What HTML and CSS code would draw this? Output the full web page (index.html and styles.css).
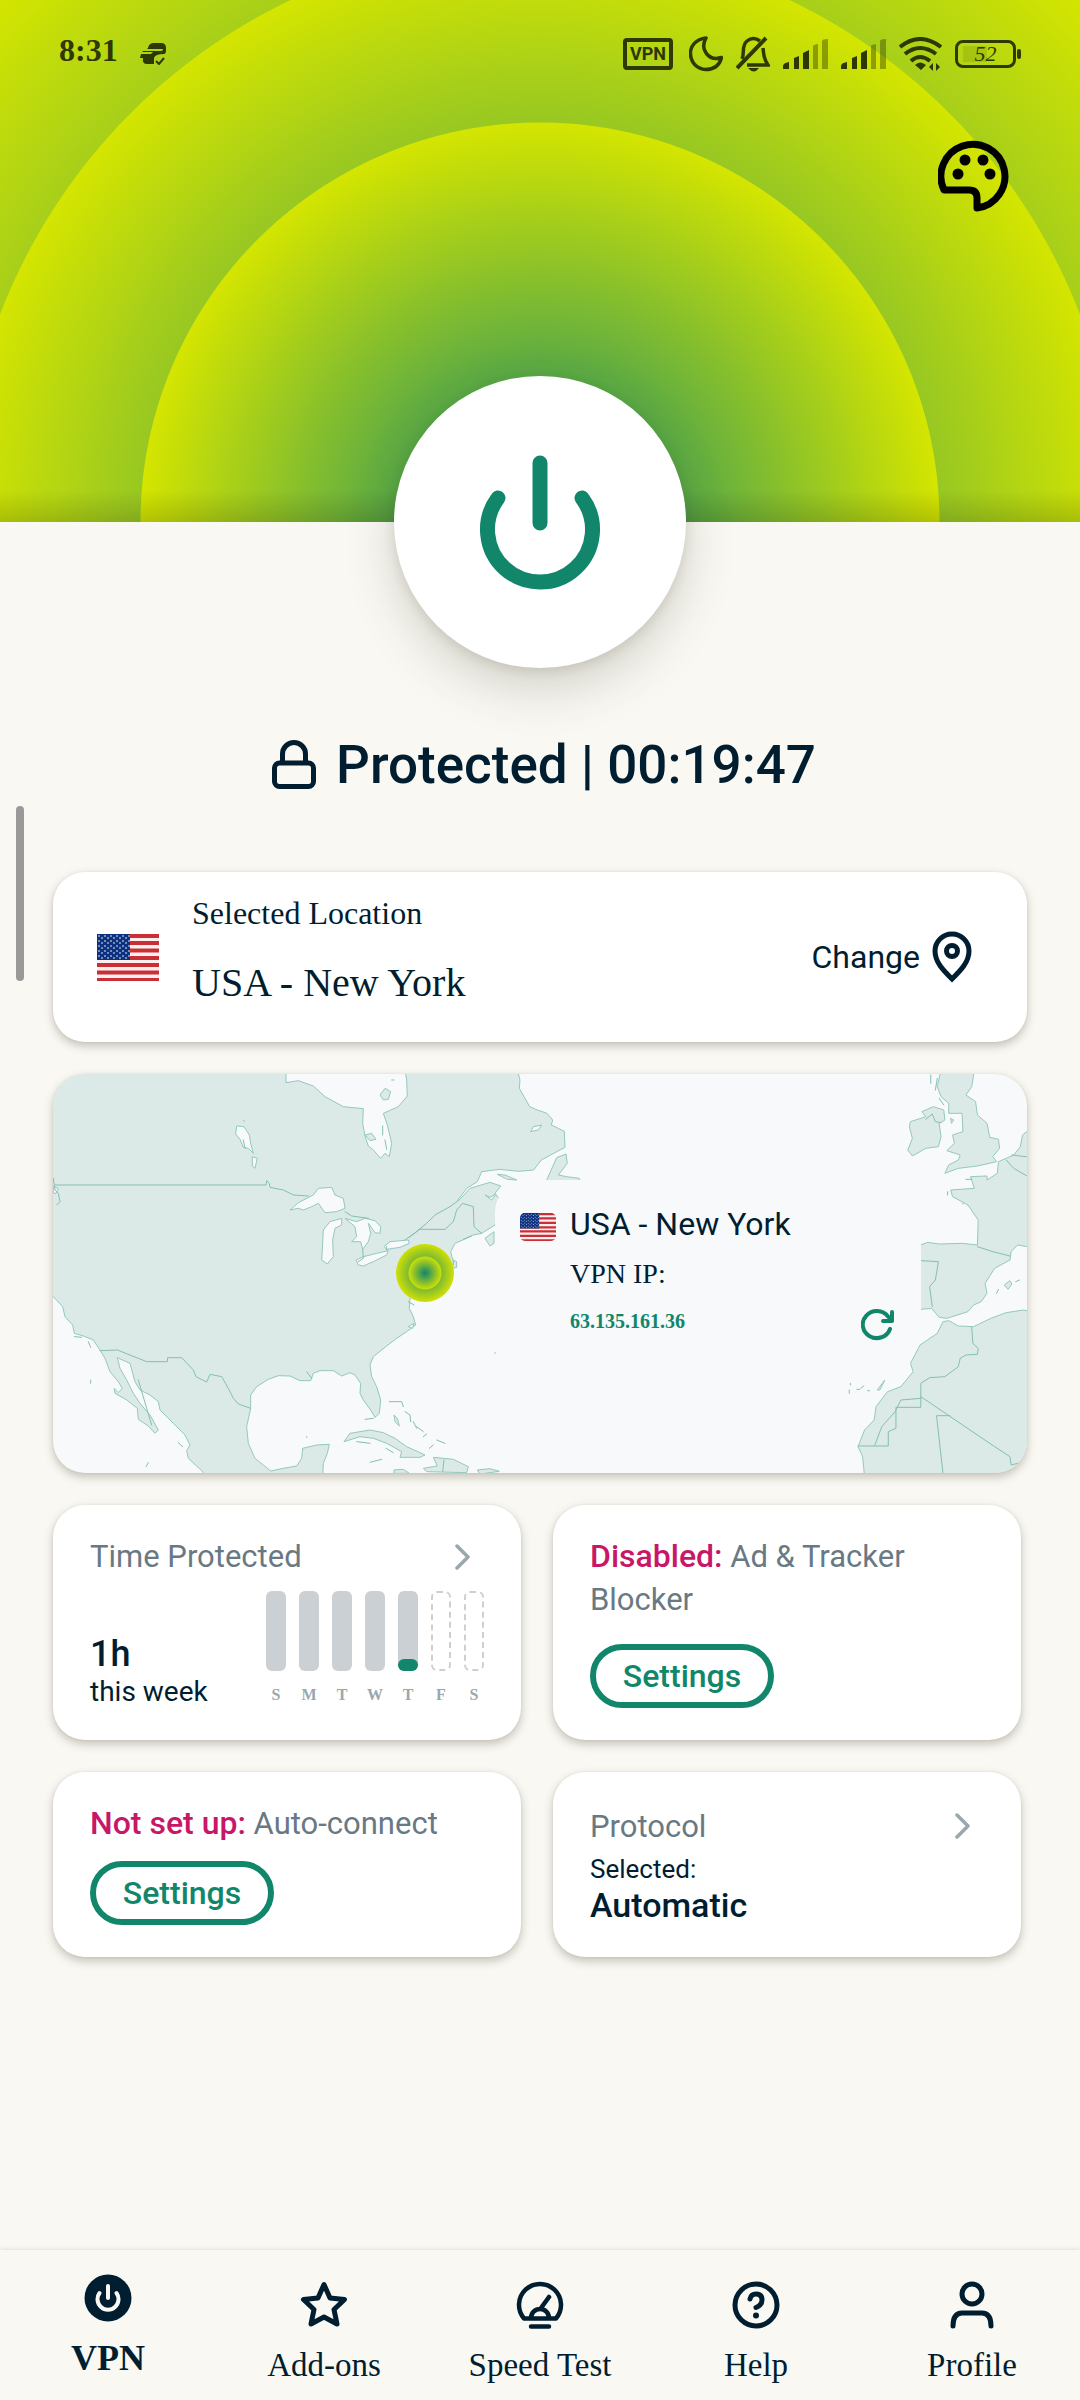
FILE: index.html
```html
<!DOCTYPE html>
<html lang="en">
<head>
<meta charset="utf-8">
<meta name="viewport" content="width=device-width, initial-scale=1">
<title>VPN</title>
<link rel="stylesheet" href="styles.css">
</head>
<body>
<svg class="defs" aria-hidden="true">
  <defs>
    <pattern id="stars" width="6" height="5" patternUnits="userSpaceOnUse">
      <circle cx="2" cy="2" r="0.8" fill="#fff"/><circle cx="5" cy="4" r="0.8" fill="#fff"/>
    </pattern>
    <symbol id="flag" viewBox="0 0 62 47" preserveAspectRatio="none">
      <rect width="62" height="47" fill="#fdeef0"/>
      <path d="M0 2h62M0 9h62M0 16.500h62M0 24h62M0 31h62M0 38.500h62M0 46h62" stroke="#c93035" stroke-width="3.800"/>
      <rect width="33" height="26" fill="#0b3180"/>
      <rect width="33" height="26" fill="url(#stars)"/>
    </symbol>
    <symbol id="chevron" viewBox="0 0 16 26">
      <path d="M2 2l11 11L2 24" fill="none" stroke="#9aa7ac" stroke-width="3.500" stroke-linecap="round" stroke-linejoin="round"/>
    </symbol>
    <symbol id="signal" viewBox="0 0 45 30">
      <path d="M0 30v-3q0-3 6-4v7zM11 30V19l5-2v13zM20 30V14l6-3v19z" fill="#2d3803"/>
      <path d="M30 30V7q0-1 5-2v25zM39 30V2q0-2 6-2v30z" fill="#2d3803" opacity=".4"/>
    </symbol>
  </defs>
</svg>

<header class="hero">
  <div class="status">
    <time class="clock">8:31</time>
    <svg class="app" width="26" height="22" viewBox="0 0 26 22"><path d="M8 5q1-5 6-5h7q5 0 5 5v2q0 4-2 4-9 0-10 4v6H7q-5 0-4-6H0l1-4h10l2-2H2l1-1h18q2 0 2-2H7z" fill="#2d3803"/><path d="M16 18l3 3 5-6" fill="none" stroke="#2d3803" stroke-width="2"/></svg>
    <div class="status-icons">
      <span class="vpn-badge">VPN</span>
      <svg width="34" height="36" viewBox="0 0 34 36"><path d="M17 2C7 3 1 10 1.500 18c.5 9 7 15 15 15.500 8 0 14-4 16-12-13 4-22-8-15.500-19.500z" fill="none" stroke="#2d3803" stroke-width="3.500" stroke-linejoin="round"/></svg>
      <svg width="34" height="36" viewBox="0 0 34 36"><path d="M6 23c3-6-1-13 5-18 5-4 9-3 13 0M27 12c1 7 0 10 5 17H11" fill="none" stroke="#2d3803" stroke-width="3.500"/><path d="M1 32L30 2" stroke="#2d3803" stroke-width="4"/><path d="M12 32h11q-5 7-11 0z" fill="#2d3803"/></svg>
      <svg width="45" height="30"><use href="#signal"/></svg>
      <svg width="45" height="30"><use href="#signal"/></svg>
      <svg width="43" height="34" viewBox="0 0 43 34"><g fill="none" stroke="#2d3803" stroke-width="4"><path d="M1 10q20-16 41 0M6 17q15-12 31 0M12 24q9-8 19 0"/></g><path d="M16 28q5-5 11 0l-5 5zM34 26v8l-4-4M37 34v-8l4 4" fill="#2d3803"/></svg>
      <span class="battery">52</span>
    </div>
  </div>
  <button class="palette" aria-label="Theme">
    <svg width="72" height="72" viewBox="0 0 72 72"><path d="M39 68A32 32 0 1 0 6 50h25q8 0 8 8z" fill="none" stroke="#000" stroke-width="7" stroke-linejoin="round"/><circle cx="20" cy="34" r="5.500"/><circle cx="27" cy="20" r="5.500"/><circle cx="45" cy="20" r="5.500"/><circle cx="52" cy="34" r="5.500"/></svg>
  </button>
</header>

<main>
  <button class="power" aria-label="Disconnect">
    <svg width="122" height="138" viewBox="0 0 122 138"><g fill="none" stroke="#11866b" stroke-width="15" stroke-linecap="round"><path d="M61 10v60M19 45a52.500 52.500 0 1 0 84 0"/></g></svg>
  </button>
  <h1 class="state">
    <svg width="48" height="52" viewBox="0 0 48 52"><g fill="none" stroke="#001e30" stroke-width="5"><rect x="4.500" y="24" width="39" height="23.500" rx="5"/><path d="M12.500 24v-9a11.500 11.500 0 0 1 23 0v9"/></g></svg>
    Protected | 00:19:47
  </h1>

  <section class="card location">
    <svg width="62" height="47"><use href="#flag"/></svg>
    <div class="place">
      <div class="place-label">Selected Location</div>
      <div class="place-name">USA - New York</div>
    </div>
    <button class="change">Change
      <svg width="48" height="52" viewBox="0 0 48 52"><path d="M24 48C15 39 7 31 7 20a17 17 0 0 1 34 0c0 11-8 19-17 28z" fill="none" stroke="#001e30" stroke-width="5"/><circle cx="24" cy="20" r="5.500" fill="none" stroke="#001e30" stroke-width="5"/></svg>
    </button>
  </section>

  <section class="card map">
    <svg class="world" viewBox="0 0 974 399" preserveAspectRatio="xMidYMid slice" aria-hidden="true">
      <g class="land" transform="translate(-13 -14) scale(.33333)">
        <path d="M30 30H738V68L775 62 820 78 855 110 910 140 970 146 968 190 975 228 985 258 1000 270 1022 295 1035 280 1048 290 1055 250 1042 195 1030 160 1075 140 1102 108 1100 60 1095 30H1432L1440 60 1438 85 1455 115 1469 140 1492 150 1521 160 1538 180 1534 195 1555 205 1573 214 1575 262 1532 285 1504 300 1481 330 1435 334 1380 328 1325 335 1312 365 1280 385 1250 425 1230 440 1260 418 1290 385 1350 367 1382 378 1365 400 1380 420 1365 495 1325 520 1300 525 1275 537 1245 550 1232 575 1238 600 1250 605 1250 622 1230 628 1190 660 1150 690 1110 715 1108 745 1120 770 1127 795 1100 815 1070 835 1040 858 1000 890 990 915 995 950 1010 980 1022 1020 1018 1060 1005 1072 992 1050 970 1020 960 1000 962 970 945 945 930 938 905 948 880 932 840 932 820 940 812 962 780 962 750 948 715 947 685 958 650 980 632 1005 632 1045 620 1100 625 1150 645 1195 670 1215 692 1233 730 1225 770 1218 785 1195 788 1165 830 1155 868 1153 862 1180 850 1210 848 1250H500L485 1232 445 1195 440 1172 450 1155 435 1125 400 1090 360 1050 355 1025 330 1005 300 990 285 965 270 910 232 893 240 925 260 960 280 1000 300 1030 330 1065 355 1110 345 1120 325 1098 295 1078 292 1045 260 1020 225 1000 222 985 235 998 247 985 235 965 210 935 195 895 180 870 160 840 130 828 103 820 98 795 75 770 68 740 38 708 30 700Z"/>
        <path d="M912 1145L930 1120 990 1110 1030 1118 1065 1135 1100 1160 1155 1185 1140 1192 1080 1192 1085 1175 1040 1150 1000 1135 960 1130ZM1150 1225L1192 1218 1180 1192 1240 1198 1285 1220 1280 1238 1160 1235ZM1312 1230L1350 1226 1378 1234 1320 1242ZM1062 1230L1090 1228 1108 1240H1062ZM975 225L995 220 1008 238 990 242ZM1020 105L1035 85 1052 95 1045 118 1030 120ZM1518 365L1550 293 1578 282 1582 310 1555 345 1580 350 1618 355V365ZM1372 343L1395 345 1430 360 1402 358ZM1062 1065L1072 1075 1078 1098 1065 1085ZM1335 535L1362 515V550L1350 558Z"/>
      </g>
      <g class="water" transform="translate(-13 -14) scale(.33333)">
        <path d="M750 450L775 428 820 405 835 385 875 382 885 405 910 415 915 445 890 455 855 458 835 430 815 440 790 450 775 445ZM850 510L870 485 905 475 905 495 885 505 878 540 880 590 862 612 845 600 848 550ZM915 475L950 485 975 475 1005 482 1022 500 1020 520 1005 518 985 490 992 520 985 545 968 568 962 545 935 545 950 530 945 500ZM948 600L970 590 1010 580 1045 572 1040 585 1000 605 970 618 955 615ZM1032 560L1050 545 1105 540 1108 550 1080 562 1040 568ZM590 198L612 200 628 225 632 250 640 280 625 265 610 262 600 238 587 222ZM637 290L652 295 645 325 637 318ZM1472 215L1480 200 1505 195 1495 210ZM40 380L55 385 48 400H40ZM1105 800L1122 790 1118 805ZM1335 405L1350 412 1368 402 1355 420Z"/>
      </g>
      <g class="border" transform="translate(-13 -14) scale(.33333)">
        <path d="M45 375H678L680 362 688 370 690 382 730 390 760 405 805 408M40 355L45 390 55 400 60 425 50 435M915 455L935 468 985 475M968 568L970 595 955 605M1040 570V560M1095 540L1140 508H1215L1240 485 1250 450 1268 430 1300 440 1302 500 1325 520M1108 532L1160 490 1185 465 1230 440M180 872L232 870 320 905H382L383 893H425L460 930 468 950 500 966 510 943 545 950 565 985 580 1015 595 1032 632 1045M1212 1200L1208 1235M1048 1025L1085 1025 1090 1040M1095 1055L1110 1065 1112 1085M1120 1085L1130 1105M1130 1100L1150 1115M1150 1130L1160 1122M1168 1165L1180 1155M1190 1140L1215 1150M975 1078L1000 1075M950 1145L990 1150M1038 1165L1060 1178M103 830L125 832M145 845L152 862M152 960V970M415 1148L428 1160M318 1220L325 1208M800 1130V1132M990 1207L1025 1198M1028 198V225M1035 240L1040 268M1055 60H1062M612 182V184M610 240L615 265M1270 538L1295 528M1105 725L1122 735M1240 600V615M1365 878V880M295 960L320 1045 335 1095M800 935L815 955"/>
      </g>
      <g class="land" transform="translate(427 -14) scale(.38265 .33333)">
        <path d="M1205 30H1292L1285 80 1270 105 1295 125 1300 165 1325 190 1332 232 1355 238 1358 265 1340 290 1350 305 1300 318 1250 325 1215 340 1225 315 1250 300 1255 285 1220 272 1240 250 1235 225 1262 215 1260 160 1225 160 1225 130 1205 110 1195 80ZM1125 185L1165 170 1155 155 1185 140 1212 150 1215 180 1200 190 1205 230 1198 260 1165 265 1130 288 1118 270 1130 235 1122 200ZM1440 205L1418 225 1412 260 1395 285 1355 305 1352 340 1325 360 1325 348 1282 350 1292 385 1230 390 1235 410 1275 435 1302 480 1300 555 1260 550 1200 552 1170 547 1140 560V740L1152 748 1180 745 1200 772 1220 775 1275 755 1290 735 1310 725 1325 700 1320 670 1345 625 1385 600 1388 575 1405 555 1440 562ZM1440 755L1420 750 1375 758 1335 775 1290 800 1250 798 1225 782 1210 785 1195 820 1150 855 1125 910 1132 935 1100 980 1065 995 1035 1040 1030 1080 1005 1110 988 1160 1000 1190 1005 1250H1440ZM1370 675L1385 662 1390 672 1380 688ZM1038 990L1058 960 1045 990ZM1230 175L1238 180 1232 190Z"/>
      </g>
      <g class="border" transform="translate(427 -14) scale(.38265 .33333)">
        <path d="M988 1158H1067V1115L1087 1105V1042H1152V970L1175 953 1215 950 1250 920 1255 895 1270 885 1300 883 1302 865 1288 850 1285 800M1152 1010L1345 1160 1385 1190 1388 1215 1412 1208M1228 1067H1193L1210 1240M1032 1155L1050 1100 1085 1055 1100 1020 1152 1015M1300 560L1340 575 1385 588M1152 602L1198 605 1190 660 1175 680 1182 740M1165 178L1182 162 1190 185 1205 188M1375 300L1395 325 1440 355M1390 285L1440 292M1178 45V70M1195 55L1190 90M1200 115L1212 135M1350 700L1355 688M1400 665L1410 660M965 1000V990M985 988H992M995 985L1003 978M1013 992H1018M968 975V970M1270 358H1285M1222 395V405M1262 430V432"/>
      </g>
    </svg>
    <span class="marker"></span>
    <div class="popup">
      <svg class="popup-flag" width="36" height="28"><use href="#flag"/></svg>
      <div class="popup-name">USA - New York</div>
      <div class="popup-label">VPN IP:</div>
      <div class="popup-ip">63.135.161.36</div>
      <button class="refresh" aria-label="Refresh IP">
        <svg width="34" height="32" viewBox="0 0 34 32"><g fill="none" stroke="#11866b" stroke-width="4" stroke-linecap="round" stroke-linejoin="round"><path d="M29 20a14 13.500 0 1 1-2-12.500L31 11"/><path d="M31 3v9h-9"/></g></svg>
      </button>
    </div>
  </section>

  <div class="tiles">
    <section class="card tile">
      <a class="tile-head" href="#time">Time Protected <svg width="16" height="26"><use href="#chevron"/></svg></a>
      <div class="usage">
        <div>
          <div class="hours">1h</div>
          <div class="week">this week</div>
        </div>
        <div class="chart">
          <span class="day"><i class="bar"></i>S</span>
          <span class="day"><i class="bar"></i>M</span>
          <span class="day"><i class="bar"></i>T</span>
          <span class="day"><i class="bar"></i>W</span>
          <span class="day"><i class="bar"><b style="height:15%"></b></i>T</span>
          <span class="day"><i class="bar future"></i>F</span>
          <span class="day"><i class="bar future"></i>S</span>
        </div>
      </div>
    </section>
    <section class="card tile">
      <p class="tile-text"><strong>Disabled:</strong> Ad &amp; Tracker Blocker</p>
      <button class="settings">Settings</button>
    </section>
    <section class="card tile">
      <p class="tile-text"><strong>Not set up:</strong> Auto-connect</p>
      <button class="settings">Settings</button>
    </section>
    <section class="card tile">
      <a class="tile-head tall" href="#protocol">Protocol <svg width="16" height="26"><use href="#chevron"/></svg></a>
      <div class="protocol">
        <div class="selected">Selected:</div>
        <div class="automatic">Automatic</div>
      </div>
    </section>
  </div>
</main>

<nav class="tabs">
  <a class="tab active" href="#vpn">
    <svg width="48" height="48" viewBox="0 0 48 48"><circle cx="24" cy="24" r="23.500" fill="#001e30"/><g fill="none" stroke="#f9f8f3" stroke-width="4" stroke-linecap="round"><path d="M24 12v12M15.500 19a10.500 10.500 0 1 0 17 0"/></g></svg>
    VPN</a>
  <a class="tab" href="#addons">
    <svg width="48" height="48" viewBox="0 0 48 48"><path d="M24 3.500l6 13.500 14.500 1.500L34 28.500 37 43l-13-7-13 7 3-14.500L3.500 18.500 18 17z" fill="none" stroke="#001e30" stroke-width="5" stroke-linejoin="round"/></svg>
    Add-ons</a>
  <a class="tab" href="#speed">
    <svg width="48" height="48" viewBox="0 0 48 48"><g fill="none" stroke="#001e30" stroke-width="4.500" stroke-linecap="round" stroke-linejoin="round"><path d="M8 37.500a21 21 0 1 1 32 0zM15 37a9 9 0 0 1 18 0M25 27l8-11M15 45.500h18"/></g></svg>
    Speed Test</a>
  <a class="tab" href="#help">
    <svg width="48" height="48" viewBox="0 0 48 48"><g fill="none" stroke="#001e30" stroke-width="5" stroke-linecap="round"><circle cx="24" cy="24" r="21"/><path d="M18 18q1-5 6-5 6 0 6 6 0 5-6 7.500"/></g><circle cx="24" cy="34.500" r="3" fill="#001e30"/></svg>
    Help</a>
  <a class="tab" href="#profile">
    <svg width="48" height="48" viewBox="0 0 48 48"><g fill="none" stroke="#001e30" stroke-width="5" stroke-linecap="round"><circle cx="24" cy="13" r="10"/><path d="M5 45q0-13 9-13h20q9 0 9 13"/></g></svg>
    Profile</a>
</nav>
<div class="scroll-thumb"></div>
</body>
</html>
```
FILE: styles.css
```css
* { box-sizing: border-box; }
body {
  margin: 0;
  min-height: 100vh;
  display: flex;
  flex-direction: column;
  position: relative;
  background: #f9f8f3;
  color: #001e30;
  font-family: Roboto, sans-serif;
  font-size: 32px;
}
.defs { position: absolute; width: 0; height: 0; }
svg { display: block; flex: none; }
a { color: inherit; text-decoration: none; }
button { font: inherit; color: inherit; background: none; border: 0; padding: 0; cursor: pointer; }

.hero {
  min-height: 522px;
  background:
    linear-gradient(to top, rgba(0, 0, 0, .15), transparent 32px),
    radial-gradient(circle at 50% 100%, #11866f 0, #d4e500 399px, transparent 400px),
    radial-gradient(circle at 50% 100%, #11866f 0, #d4e500 578px, transparent 579px),
    radial-gradient(circle at 50% 100%, #11866f 0, #d4e500 750px);
}
.status {
  display: flex;
  align-items: center;
  height: 108px;
  padding: 0 64px 0 59px;
  color: #2d3803;
}
.clock { padding-bottom: 8px; font: bold 32px/40px "Liberation Serif", serif; }
.app { margin-left: 22px; }
.status-icons { display: flex; align-items: center; gap: 13px; margin-left: auto; }
.vpn-badge {
  width: 50px;
  margin-right: 3px;
  border: 4px solid #2d3803;
  border-radius: 4px;
  font-size: 18px;
  line-height: 24px;
  font-weight: 700;
  text-align: center;
}
.battery {
  position: relative;
  width: 61px;
  border: 3px solid #2d3803;
  border-radius: 8px;
  background: linear-gradient(rgba(45, 56, 3, .12), rgba(45, 56, 3, .12)) 5px 50% / 24px 16px no-repeat;
  font: italic 22px/22px "Liberation Serif", serif;
  text-align: center;
}
.battery::after {
  content: "";
  position: absolute;
  left: 59px;
  top: 6px;
  width: 4px;
  height: 10px;
  border-radius: 2px;
  background: #2d3803;
}
.palette { display: block; margin: 32px 70px 0 auto; }

main { padding: 0 53px; }
.power {
  position: relative;
  display: flex;
  align-items: center;
  justify-content: center;
  width: 292px;
  height: 292px;
  margin: -146px auto 0;
  border-radius: 50%;
  background: #fff;
  box-shadow: 0 20px 50px rgba(60, 55, 30, .2), 0 4px 12px rgba(60, 55, 30, .12);
}
.state {
  display: flex;
  align-items: center;
  justify-content: center;
  gap: 18px;
  margin: 67px 0 77px;
  padding-left: 6px;
  font-size: 53px;
  line-height: 60px;
  font-weight: 500;
}
.card {
  border-radius: 32px;
  background: #fff;
  box-shadow: 0 4px 10px rgba(60, 55, 30, .28), 0 0 3px rgba(60, 55, 30, .08);
}
.location {
  display: flex;
  align-items: center;
  gap: 33px;
  min-height: 170px;
  padding: 0 51px 0 44px;
}
.place {
  display: grid;
  gap: 26px;
  flex: 1;
  padding-bottom: 18px;
  font-family: "Liberation Serif", serif;
  line-height: 44px;
}
.place-name { font-size: 40px; }
.change { display: flex; align-items: center; gap: 8px; }

.map {
  position: relative;
  margin: 32px 0;
  overflow: hidden;
  background: #f7f9fb;
}
.world { width: 100%; height: 399px; }
.land, .water { fill: #dbe9e7; stroke: #94c8bd; stroke-width: 1; }
.water { fill: #f7f9fb; }
.border { fill: none; stroke: #84bfb2; stroke-width: 1; stroke-linejoin: round; stroke-linecap: round; }
.land path, .water path, .border path { vector-effect: non-scaling-stroke; }
.marker {
  position: absolute;
  left: calc(50% - 144px);
  top: 170px;
  width: 58px;
  height: 58px;
  border-radius: 50%;
  background:
    radial-gradient(circle, #11866f 0, #c8de09 16px, transparent 17px),
    radial-gradient(circle, #11866f 0, #cfe104 29px);
}
.popup {
  position: absolute;
  left: calc(50% - 45px);
  top: 106px;
  display: grid;
  grid-template-columns: 36px 1fr 44px;
  grid-template-rows: 44px 44px 38px;
  column-gap: 14px;
  row-gap: 6px;
  align-items: center;
  width: 426px;
  padding: 22px 21px 26px 25px;
  border-radius: 32px;
  background: #f7f9fb;
}
.popup-flag { margin-top: 6px; border-radius: 5px; }
.popup-name { grid-column: 2 / 4; }
.popup-label { grid-column: 2; font: 28px/44px "Liberation Serif", serif; }
.popup-ip { grid-area: 3 / 2; color: #11866b; font: bold 20px/38px "Liberation Serif", serif; }
.refresh { grid-area: 3 / 3; display: flex; justify-content: center; padding-top: 8px; }

.tiles {
  display: grid;
  grid-template-columns: 1fr 1fr;
  grid-template-rows: minmax(235px, auto) minmax(185px, auto);
  gap: 32px;
  margin-right: 6px;
}
.tile {
  display: flex;
  flex-direction: column;
  align-items: flex-start;
  padding: 30px 37px 32px;
  line-height: 43px;
}
.tile-head {
  display: flex;
  align-items: center;
  justify-content: space-between;
  width: 100%;
  padding-right: 13px;
  color: #697983;
  font-size: 31px;
}
.tall { min-height: 48px; }
.tile-text { margin: 0; color: #697983; font-size: 31px; }
.tile-text strong { font-size: 32px; font-weight: 500; color: #c81768; }
.settings {
  margin-top: auto;
  width: 184px;
  height: 64px;
  border: 6px solid #11866b;
  border-radius: 32px;
  color: #11866b;
  font-weight: 500;
}
.usage {
  display: flex;
  align-items: flex-end;
  justify-content: space-between;
  width: 100%;
  margin-top: auto;
}
.hours { font-size: 36px; line-height: 44px; font-weight: 500; }
.week { font-size: 28px; line-height: 32px; }
.chart { display: flex; gap: 13px; }
.day {
  display: flex;
  flex-direction: column;
  align-items: center;
  gap: 10px;
  width: 20px;
  color: #9aa7ac;
  font: bold 16px/27px "Liberation Serif", serif;
}
.bar {
  display: flex;
  align-items: flex-end;
  width: 20px;
  height: 80px;
  border-radius: 6px;
  background: #cbd0d4;
}
.bar b { width: 100%; border-radius: 6px; background: #11866b; }
.future { border: 2px dashed #cbd0d4; background: none; }
.protocol { margin-top: auto; }
.selected { font-size: 26px; line-height: 32px; }
.automatic { font-size: 34px; line-height: 40px; font-weight: 500; }

.tabs {
  display: grid;
  grid-template-columns: repeat(5, 1fr);
  margin-top: auto;
  min-height: 150px;
  box-shadow: 0 -1px 4px rgba(60, 55, 30, .12);
}
.tab {
  display: flex;
  flex-direction: column;
  align-items: center;
  gap: 16px;
  padding-top: 31px;
  font: 33px/40px "Liberation Serif", serif;
}
.active { padding-top: 24px; font-size: 36px; font-weight: 700; }
.scroll-thumb {
  position: absolute;
  left: 16px;
  top: 806px;
  width: 8px;
  height: 175px;
  border-radius: 4px;
  background: #999;
}
```
